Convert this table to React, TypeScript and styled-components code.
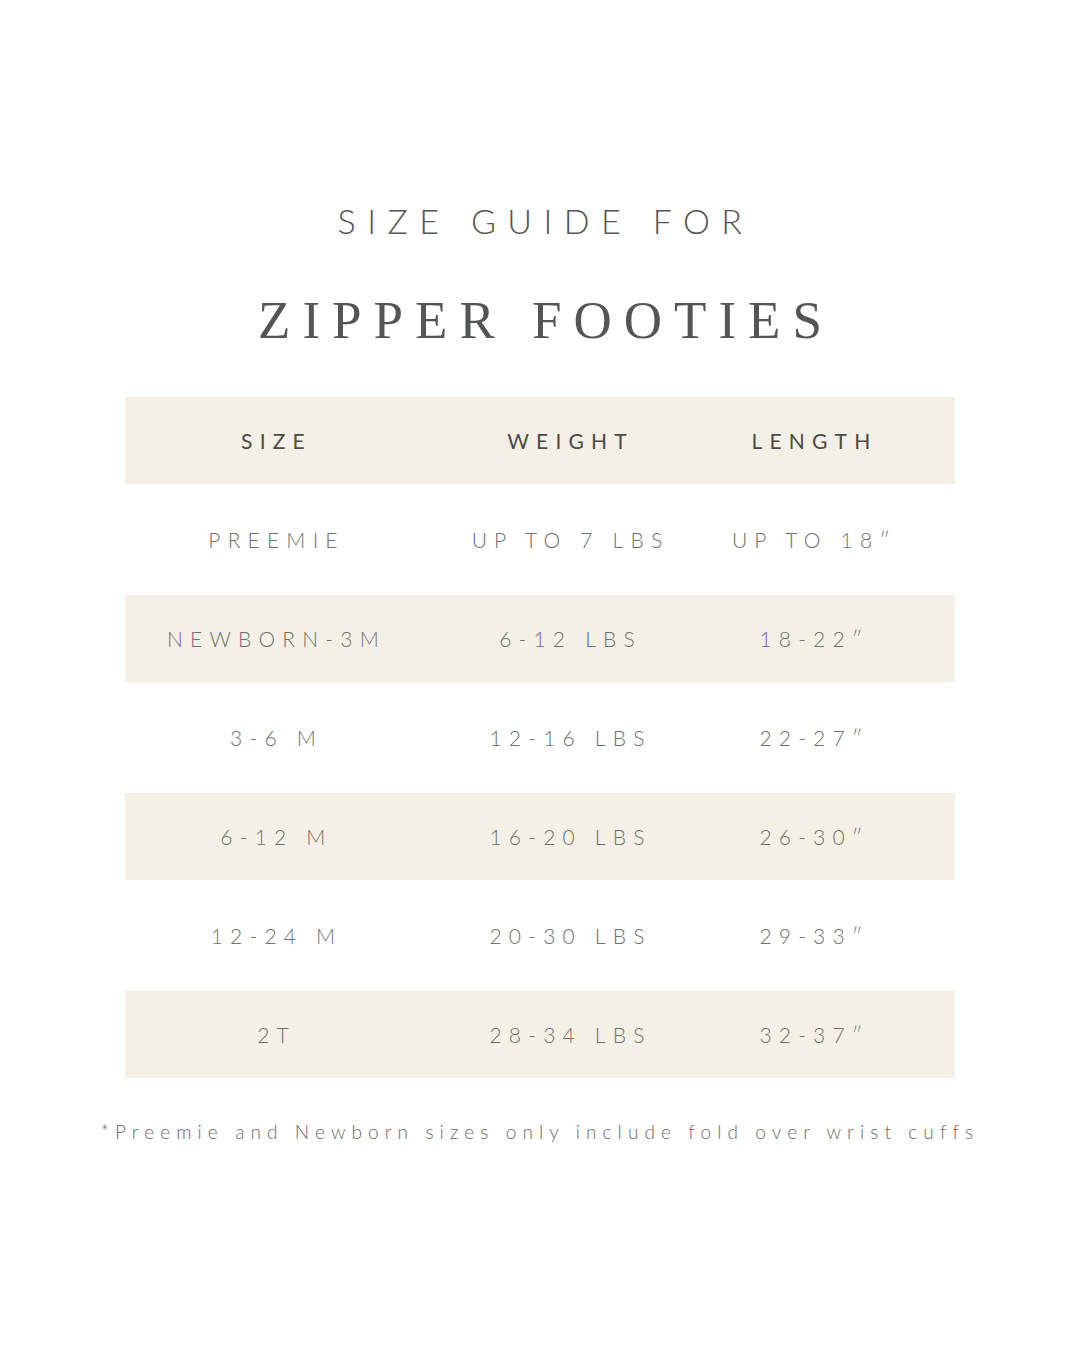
import React from 'react';
import styled, { createGlobalStyle } from 'styled-components';

const GlobalStyle = createGlobalStyle`
  body {
    margin: 0;
    background: #ffffff;
  }
`;

const Page = styled.div`
  width: 1080px;
  height: 1350px;
  background: #ffffff;
  display: flex;
  flex-direction: column;
  align-items: center;
  padding-top: 201px;
  box-sizing: border-box;
`;

const Subtitle = styled.h2`
  margin: 0;
  font-family: 'Lato', 'Liberation Sans', sans-serif;
  font-weight: 300;
  font-size: 34px;
  line-height: 40px;
  letter-spacing: 11.4px;
  padding-left: 11px;
  color: #555555;
`;

const Title = styled.h1`
  margin: 49px 0 0;
  font-family: 'Liberation Serif', 'DejaVu Serif', serif;
  font-weight: 400;
  font-size: 53px;
  line-height: 60px;
  letter-spacing: 12px;
  padding-left: 12px;
  color: #545656;
`;

const Table = styled.div`
  width: 830px;
  margin-top: 47px;
  display: flex;
  flex-direction: column;
`;

const Row = styled.div<{ $shaded?: boolean }>`
  display: grid;
  grid-template-columns: 298px 290px 198px;
  align-items: center;
  height: ${(p) => (p.$shaded ? '87px' : '111px')};
  background: ${(p) => (p.$shaded ? '#f4f0e5' : '#ffffff')};
`;

const Cell = styled.div<{ $head?: boolean }>`
  text-align: center;
  font-family: 'Lato', 'Liberation Sans', sans-serif;
  font-weight: ${(p) => (p.$head ? 400 : 300)};
  font-size: 21px;
  letter-spacing: 7.2px;
  padding-left: 5px;
  color: ${(p) => (p.$head ? '#4a4a4a' : '#707070')};
  white-space: nowrap;
`;

const Note = styled.p`
  margin: 42px 0 0;
  font-family: 'Lato', 'Liberation Sans', sans-serif;
  font-weight: 300;
  font-size: 19px;
  letter-spacing: 6.1px;
  color: #6a6a6a;
  white-space: nowrap;
`;

const rows = [
  ['PREEMIE', 'UP TO 7 LBS', 'UP TO 18\u2033'],
  ['NEWBORN-3M', '6-12 LBS', '18-22\u2033'],
  ['3-6 M', '12-16 LBS', '22-27\u2033'],
  ['6-12 M', '16-20 LBS', '26-30\u2033'],
  ['12-24 M', '20-30 LBS', '29-33\u2033'],
  ['2T', '28-34 LBS', '32-37\u2033'],
];

const App = () => {
  return (
    <>
      <GlobalStyle />
      <Page>
        <Subtitle>SIZE GUIDE FOR</Subtitle>
        <Title>ZIPPER FOOTIES</Title>
        <Table>
          <Row $shaded>
            <Cell $head>SIZE</Cell>
            <Cell $head>WEIGHT</Cell>
            <Cell $head>LENGTH</Cell>
          </Row>
          {rows.map((r, i) => (
            <Row key={r[0]} $shaded={i % 2 === 1}>
              {r.map((c) => (
                <Cell key={c}>{c}</Cell>
              ))}
            </Row>
          ))}
        </Table>
        <Note>*Preemie and Newborn sizes only include fold over wrist cuffs</Note>
      </Page>
    </>
  );
};

export default App;
